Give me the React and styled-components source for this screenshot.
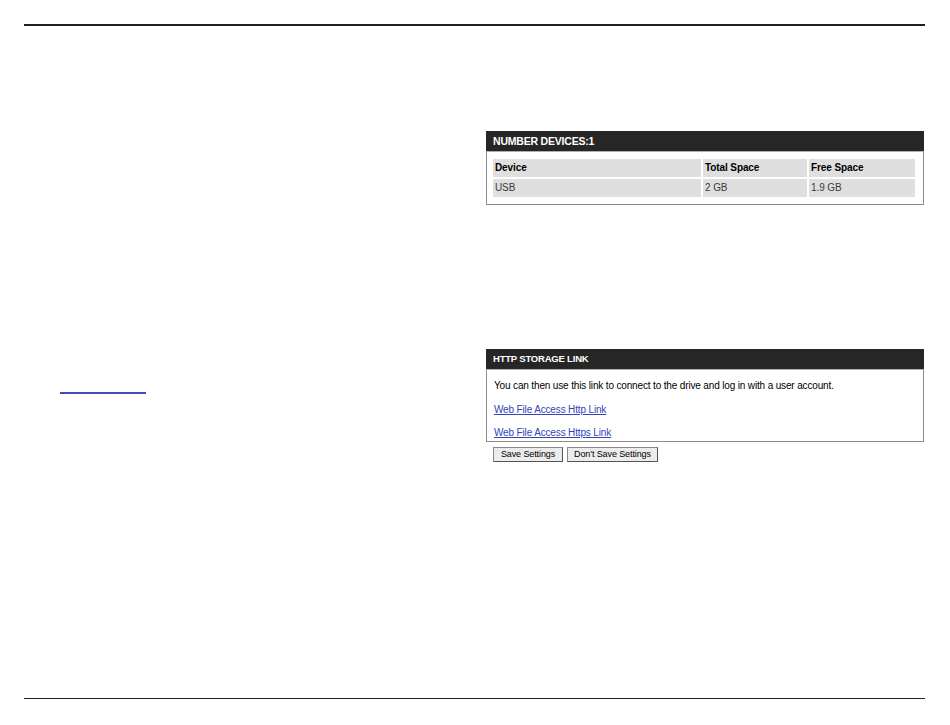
import React from "react"
import styled, { createGlobalStyle } from "styled-components"

const GlobalStyle = createGlobalStyle`
	html, body {
		margin: 0;
		padding: 0;
		background: #fff;
	}
	body {
		font-family: "Liberation Sans", Arial, sans-serif;
		color: #000;
	}
`

const Page = styled.div`
	width: 950px;
	height: 725px;
	box-sizing: border-box;
	padding: 24px 25px 0 24px;
	display: flex;
	flex-direction: column;
`

const Rule = styled.hr`
	margin: 0;
	border: 0;
	height: 1.5px;
	background: #1f1f1f;
`

const Body = styled.div`
	height: 672px;
	display: grid;
	grid-template-columns: 462px 438px;
`

const LeftCol = styled.div`
	padding-top: 358px;
	padding-left: 36px;
`

const BlankLink = styled.a`
	display: block;
	width: 86px;
	height: 8px;
	border-bottom: 2px solid #3a4fc4;
`

const RightCol = styled.div`
	padding-top: 105px;
	display: flex;
	flex-direction: column;
`

const Panel = styled.div`
	border: 1px solid #8c8c8c;
	border-top: 0;
	margin-bottom: ${({ gap }) => gap || 0}px;
`

const PanelHead = styled.div`
	background: #262626;
	color: #fff;
	font-weight: bold;
	font-size: ${({ size }) => size || 10}px;
	height: 20px;
	line-height: 20px;
	padding-left: 7px;
	letter-spacing: -0.2px;
	margin: 0 -1px;
	border-bottom: 1px solid #b0b0b0;
`

const PanelBody = styled.div`
	padding: ${({ pad }) => pad || "6px 7px 6px 7px"};
	font-size: 10px;
`

const Table = styled.table`
	width: 100%;
	border-collapse: separate;
	border-spacing: 2px;
	font-size: 10px;
	letter-spacing: -0.1px;

	th, td {
		background: #dfdfdf;
		text-align: left;
		height: 18px;
		padding: 0 2px;
		color: #3a3a3a;
	}
	th {
		font-weight: bold;
		color: #000;
	}
`

const Para = styled.p`
	margin: 0;
	font-size: 10px;
	letter-spacing: -0.15px;
	line-height: 12px;
	margin-bottom: ${({ mb }) => mb || 0}px;
`

const Link = styled.a`
	color: #3344bb;
	text-decoration: underline;
	font-size: 10px;
	letter-spacing: -0.15px;
`

const Buttons = styled.div`
	display: flex;
	gap: 4px;
	padding: 5px 0 0 7px;
`

const Button = styled.button`
	font-family: "Liberation Sans", Arial, sans-serif;
	font-size: 9px;
	letter-spacing: -0.1px;
	height: 15px;
	padding: 0 4px;
	background: #ececec;
	border: 1px solid #8a8a8a;
	border-right-color: #555;
	border-bottom-color: #555;
	color: #000;
	line-height: 13px;
	width: ${({ w }) => w}px;
`

export default function App() {
	return (
		<>
			<GlobalStyle />
			<Page>
				<Rule />
				<Body>
					<LeftCol>
						<BlankLink href="#" />
					</LeftCol>
					<RightCol>
						<Panel gap={144}>
							<PanelHead size={10.5}>NUMBER DEVICES:1</PanelHead>
							<PanelBody pad="5px 6px 5px 4px">
								<Table>
									<colgroup>
										<col style={{ width: "208px" }} />
										<col style={{ width: "104px" }} />
										<col />
									</colgroup>
									<thead>
										<tr>
											<th>Device</th>
											<th>Total Space</th>
											<th>Free Space</th>
										</tr>
									</thead>
									<tbody>
										<tr>
											<td>USB</td>
											<td>2 GB</td>
											<td>1.9 GB</td>
										</tr>
									</tbody>
								</Table>
							</PanelBody>
						</Panel>
						<Panel>
							<PanelHead size={9.5}>HTTP STORAGE LINK</PanelHead>
							<PanelBody pad="10px 7px 2px 7px">
								<Para mb={12}>
									You can then use this link to connect to the drive and log in with a user account.
								</Para>
								<Para mb={11}>
									<Link href="#">Web File Access Http Link</Link>
								</Para>
								<Para>
									<Link href="#">Web File Access Https Link</Link>
								</Para>
							</PanelBody>
						</Panel>
						<Buttons>
							<Button w={70}>Save Settings</Button>
							<Button w={91}>Don't Save Settings</Button>
						</Buttons>
					</RightCol>
				</Body>
				<Rule />
			</Page>
		</>
	)
}
